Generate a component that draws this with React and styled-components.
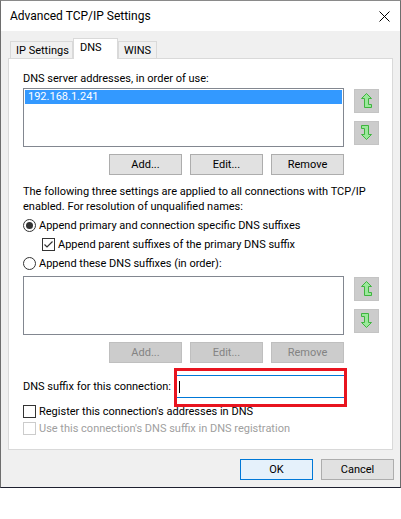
import React from "react";
import styled, { createGlobalStyle, css } from "styled-components";

const GlobalStyle = createGlobalStyle`
  html, body {
    margin: 0;
    padding: 0;
    background: #ffffff;
  }
  body {
    font-family: Roboto, "Liberation Sans", Arial, sans-serif;
    font-size: 11px;
    color: #000;
  }
`;

const Window = styled.div`
  width: 401px;
  height: 488px;
  box-sizing: border-box;
  border-left: 1px solid #6e6e6e;
  border-right: 1px solid #6e6e6e;
  border-bottom: 1px solid #1e2030;
  border-top: 1px solid #8a8a8a;
  display: flex;
  flex-direction: column;
  background: #f0f0f0;
`;

const TitleBar = styled.div`
  height: 30px;
  background: #ffffff;
  display: flex;
  align-items: center;
  justify-content: space-between;
  padding: 0 9px 0 9px;
  font-size: 12px;
  flex: none;
`;

const CloseIcon = styled.svg`
  width: 11px;
  height: 11px;
  margin-right: 1px;
`;

const Body = styled.div`
  flex: 1;
  display: flex;
  flex-direction: column;
  padding: 7px 7px 0 7px;
`;

const TabStrip = styled.div`
  display: flex;
  align-items: flex-end;
  height: 21px;
  padding-left: 2px;
  margin-bottom: -1px;
  position: relative;
  z-index: 1;
`;

const Tab = styled.div`
  box-sizing: border-box;
  width: ${p => p.$width}px;
  height: ${p => (p.$active ? "21px" : "18px")};
  padding: ${p => (p.$active ? "0 0 3px 6px" : "0 0 0 5px")};
  display: flex;
  align-items: center;
  border: 1px solid #d9d9d9;
  border-bottom: ${p => (p.$active ? "none" : "1px solid #d9d9d9")};
  background: ${p => (p.$active ? "#ffffff" : "#f0f0f0")};
`;

const Panel = styled.div`
  height: 392px;
  box-sizing: border-box;
  background: #ffffff;
  border: 1px solid #d9d9d9;
  padding: 12px 0 0 14px;
  display: flex;
  flex-direction: column;
`;

const Label = styled.div`
  line-height: 15px;
  height: 15px;
`;

const Paragraph = styled.div`
  line-height: 15px;
  margin-top: 9px;
  width: 350px;
`;

const ListRow = styled.div`
  display: flex;
  gap: 10px;
  margin-top: ${p => p.$top || 0}px;
`;

const ListBox = styled.div`
  width: 321px;
  height: 59px;
  box-sizing: border-box;
  border: 1px solid #828790;
  background: #ffffff;
  padding: 1px;
`;

const ListItem = styled.div`
  height: 14px;
  line-height: 14px;
  background: #3399ff;
  color: #ffffff;
  padding-left: 3px;
`;

const ArrowColumn = styled.div`
  display: flex;
  flex-direction: column;
  gap: 8px;
  padding-top: 1px;
`;

const ArrowButton = styled.div`
  width: 25px;
  height: 24px;
  box-sizing: border-box;
  background: #cccccc;
  border: 1px solid #c4c4c4;
  display: flex;
  align-items: center;
  justify-content: center;
`;

const ButtonRow = styled.div`
  display: flex;
  justify-content: flex-end;
  gap: 8px;
  width: 321px;
  margin-top: 7px;
`;

const Button = styled.div`
  width: 73px;
  height: 21px;
  box-sizing: border-box;
  display: flex;
  align-items: center;
  justify-content: center;
  border: 1px solid #adadad;
  background: #e1e1e1;
  color: #000;
  ${p =>
    p.$disabled &&
    css`
      background: #cccccc;
      border-color: #bfbfbf;
      color: #838383;
    `}
  ${p =>
    p.$default &&
    css`
      background: #e5f1fb;
      border-color: #0078d7;
    `}
`;

const OptionRow = styled.div`
  display: flex;
  align-items: center;
  gap: 3px;
  height: 15px;
  margin-top: ${p => p.$top || 0}px;
  margin-left: ${p => p.$indent || 0}px;
  color: ${p => (p.$disabled ? "#a0a0a0" : "#000")};
`;

const Radio = styled.div`
  width: 13px;
  height: 13px;
  box-sizing: border-box;
  border-radius: 50%;
  border: 1px solid #333333;
  background: #ffffff;
  display: flex;
  align-items: center;
  justify-content: center;
  &::after {
    content: "";
    display: ${p => (p.$checked ? "block" : "none")};
    width: 7px;
    height: 7px;
    border-radius: 50%;
    background: #333333;
  }
`;

const CheckBox = styled.div`
  width: 13px;
  height: 13px;
  box-sizing: border-box;
  border: 1px solid ${p => (p.$disabled ? "#cccccc" : "#333333")};
  background: #ffffff;
  display: flex;
  align-items: center;
  justify-content: center;
`;

const SuffixRow = styled.div`
  display: flex;
  align-items: center;
  margin-top: 12px;
  height: 23px;
`;

const SuffixLabel = styled.div`
  width: 151px;
  line-height: 15px;
`;

const TextInput = styled.div`
  width: 173px;
  height: 23px;
  box-sizing: border-box;
  border: 1px solid #0078d7;
  background: #ffffff;
  position: relative;
  display: flex;
  align-items: center;
  padding-left: 4px;
`;

const Caret = styled.div`
  width: 1px;
  height: 12px;
  background: #000;
`;

const Highlight = styled.div`
  position: absolute;
  left: -1px;
  top: -8px;
  width: 173px;
  height: 39px;
  box-sizing: border-box;
  border: 3px solid #e8141f;
  pointer-events: none;
`;

const Footer = styled.div`
  display: flex;
  justify-content: flex-end;
  gap: 8px;
  padding-top: 9px;
  margin-right: -1px;
`;

const UpArrow = () => (
  <svg width="12" height="16" viewBox="0 0 12 16">
    <polygon
      points="5.5,0.5 10.5,5.5 7.5,5.5 7.5,11.5 10.5,11.5 10.5,14.5 3.5,14.5 3.5,5.5 0.5,5.5"
      fill="#9be89b"
      stroke="#3fb43f"
      strokeWidth="1"
    />
  </svg>
);

const DownArrow = () => (
  <svg width="12" height="16" viewBox="0 0 12 16">
    <polygon
      points="0.5,0.5 7.5,0.5 7.5,9.5 10.5,9.5 5.5,14.5 0.5,9.5 3.5,9.5 3.5,3.5 0.5,3.5"
      fill="#9be89b"
      stroke="#3fb43f"
      strokeWidth="1"
    />
  </svg>
);

const Check = () => (
  <svg width="11" height="11" viewBox="0 0 11 11">
    <polyline points="1.5,5.5 4,8 9.5,2.5" fill="none" stroke="#333" strokeWidth="1.2" />
  </svg>
);

const Arrows = () => (
  <ArrowColumn>
    <ArrowButton>
      <UpArrow />
    </ArrowButton>
    <ArrowButton>
      <DownArrow />
    </ArrowButton>
  </ArrowColumn>
);

export default function App() {
  return (
    <>
      <GlobalStyle />
      <Window>
        <TitleBar>
          <span>Advanced TCP/IP Settings</span>
          <CloseIcon viewBox="0 0 11 11">
            <path d="M0.5 0.5 L10.5 10.5 M10.5 0.5 L0.5 10.5" stroke="#000" strokeWidth="1" />
          </CloseIcon>
        </TitleBar>
        <Body>
          <TabStrip>
            <Tab $width={63}>IP Settings</Tab>
            <Tab $width={45} $active>DNS</Tab>
            <Tab $width={39}>WINS</Tab>
          </TabStrip>
          <Panel>
            <Label>DNS server addresses, in order of use:</Label>
            <ListRow $top={2}>
              <ListBox>
                <ListItem>192.168.1.241</ListItem>
              </ListBox>
              <Arrows />
            </ListRow>
            <ButtonRow>
              <Button>Add...</Button>
              <Button>Edit...</Button>
              <Button>Remove</Button>
            </ButtonRow>
            <Paragraph>
              The following three settings are applied to all connections with TCP/IP
              enabled. For resolution of unqualified names:
            </Paragraph>
            <OptionRow $top={4}>
              <Radio $checked />
              Append primary and connection specific DNS suffixes
            </OptionRow>
            <OptionRow $top={4} $indent={19}>
              <CheckBox>
                <Check />
              </CheckBox>
              Append parent suffixes of the primary DNS suffix
            </OptionRow>
            <OptionRow $top={4}>
              <Radio />
              Append these DNS suffixes (in order):
            </OptionRow>
            <ListRow $top={5}>
              <ListBox />
              <Arrows />
            </ListRow>
            <ButtonRow>
              <Button $disabled>Add...</Button>
              <Button $disabled>Edit...</Button>
              <Button $disabled>Remove</Button>
            </ButtonRow>
            <SuffixRow>
              <SuffixLabel>DNS suffix for this connection:</SuffixLabel>
              <TextInput>
                <Caret />
                <Highlight />
              </TextInput>
            </SuffixRow>
            <OptionRow $top={6}>
              <CheckBox />
              Register this connection's addresses in DNS
            </OptionRow>
            <OptionRow $top={2} $disabled>
              <CheckBox $disabled />
              Use this connection's DNS suffix in DNS registration
            </OptionRow>
          </Panel>
          <Footer>
            <Button $default>OK</Button>
            <Button>Cancel</Button>
          </Footer>
        </Body>
      </Window>
    </>
  );
}
